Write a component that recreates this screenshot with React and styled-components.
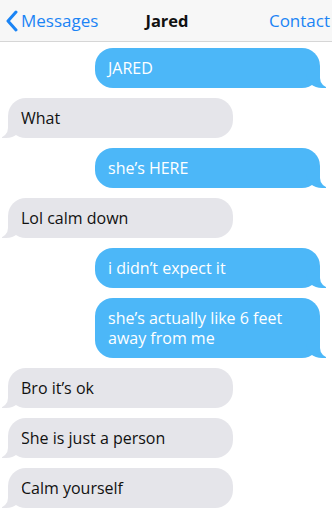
import React from 'react';
import styled, { createGlobalStyle, css } from 'styled-components';

const GlobalStyle = createGlobalStyle`
  body {
    margin: 0;
    background: #fff;
    font-family: 'Open Sans', 'Liberation Sans', sans-serif;
  }
`;

const Screen = styled.div`
  width: 332px;
  height: 517px;
  overflow: hidden;
  background: #fff;
`;

const NavBar = styled.div`
  height: 41px;
  display: grid;
  grid-template-columns: 1fr auto 1fr;
  align-items: center;
  background: #f7f7f7;
  border-bottom: 1px solid #d6d6d6;
  font-size: 17px;
`;

const BackLink = styled.div`
  display: flex;
  align-items: center;
  gap: 2px;
  padding-left: 5px;
  color: #1b84f5;
`;

const Title = styled.div`
  font-weight: 700;
  color: #111;
  font-size: 16.5px;
  padding-left: 2px;
`;

const NavAction = styled.div`
  justify-self: end;
  color: #1b84f5;
  margin-right: 2px;
  white-space: nowrap;
`;

const Thread = styled.div`
  display: flex;
  flex-direction: column;
  gap: 10px;
  padding: 6px 12px 0 8px;
`;

const Bubble = styled.div`
  position: relative;
  width: 225px;
  box-sizing: border-box;
  padding: 10px 13px;
  border-radius: 18px;
  font-size: 16px;
  line-height: 20px;

  &::before,
  &::after {
    content: '';
    position: absolute;
    bottom: 0;
    height: 20px;
  }

  ${p =>
    p.$mine
      ? css`
          align-self: flex-end;
          background: #4cb7f8;
          color: #fff;
          &::before {
            right: -6px;
            width: 20px;
            background: #4cb7f8;
            border-bottom-left-radius: 16px 14px;
          }
          &::after {
            right: -10px;
            width: 10px;
            background: #fff;
            border-bottom-left-radius: 10px;
          }
        `
      : css`
          align-self: flex-start;
          background: #e5e5ea;
          color: #111;
          &::before {
            left: -6px;
            width: 20px;
            background: #e5e5ea;
            border-bottom-right-radius: 16px 14px;
          }
          &::after {
            left: -10px;
            width: 10px;
            background: #fff;
            border-bottom-right-radius: 10px;
          }
        `}
`;

const messages = [
  { mine: true, text: 'JARED' },
  { mine: false, text: 'What' },
  { mine: true, text: 'she’s HERE' },
  { mine: false, text: 'Lol calm down' },
  { mine: true, text: 'i didn’t expect it' },
  { mine: true, text: 'she’s actually like 6 feet away from me' },
  { mine: false, text: 'Bro it’s ok' },
  { mine: false, text: 'She is just a person' },
  { mine: false, text: 'Calm yourself' },
];

const Chevron = () => (
  <svg width="14" height="22" viewBox="0 0 14 22">
    <polyline points="11,2 3,11 11,20" fill="none" stroke="#1b84f5" strokeWidth="3" strokeLinecap="round" strokeLinejoin="round" />
  </svg>
);

export default function App() {
  return (
    <Screen>
      <GlobalStyle />
      <NavBar>
        <BackLink>
          <Chevron />
          Messages
        </BackLink>
        <Title>Jared</Title>
        <NavAction>Contact</NavAction>
      </NavBar>
      <Thread>
        {messages.map((m, i) => (
          <Bubble key={i} $mine={m.mine}>
            {m.text}
          </Bubble>
        ))}
      </Thread>
    </Screen>
  );
}
